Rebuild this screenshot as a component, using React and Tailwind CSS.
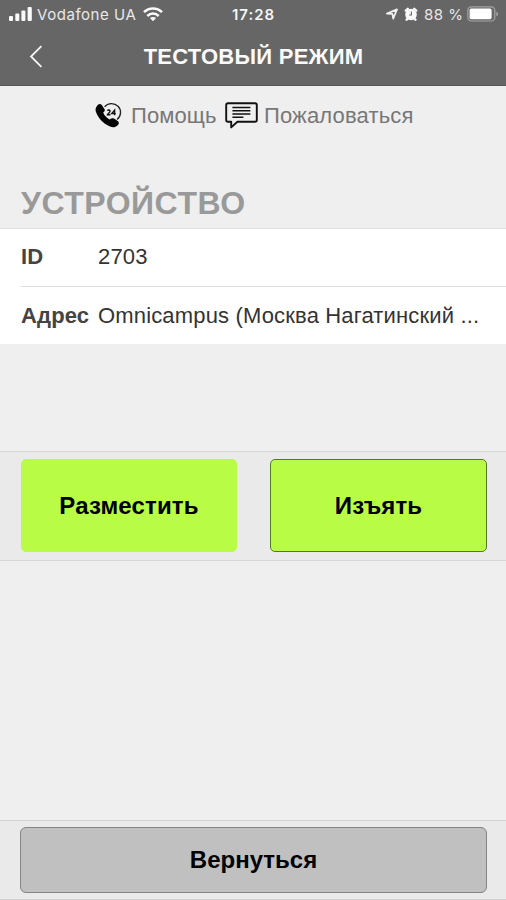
import { useState } from 'react'

const device = [
  { label: 'ID', value: '2703' },
  { label: 'Адрес',
    value: 'Omnicampus (Москва Нагатинский ...' },
]

function StatusBar() {
  return (
    <div className="relative flex h-7 items-center
      justify-between pl-[9px] pr-[7px]
      font-['Inter',sans-serif] text-[15px]
      leading-none text-[#e8e8e8]">
      <div className="flex items-center">
        <svg width="23" height="15" viewBox="0 0 23 15"
          fill="#fafafa">
          <rect x="0" y="9" width="4" height="5" rx="1" />
          <rect x="6.3" y="6.5" width="4" height="7.5" rx="1" />
          <rect x="12.4" y="3.5" width="4" height="10.5" rx="1" />
          <rect x="18.6" y="0" width="4.2" height="14" rx="1" />
        </svg>
        <span className="ml-[5px] w-[100px]
          whitespace-nowrap tracking-[0.55px]">
          Vodafone UA
        </span>
        <svg className="ml-[6px]" width="20" height="15"
          viewBox="0 0 20 15" fill="none"
          stroke="#fafafa" strokeWidth="2.5">
          <path d="M1 5.2C6 .2 14 .2 19 5.2" />
          <path d="M4.3 9C7.6 5.8 12.4 5.8 15.7 9" />
          <path d="M10 14.2 6.9 11.1C8.7 9.6 11.3 9.6 13.1 11.1Z"
            fill="#fafafa" stroke="none" />
        </svg>
      </div>
      <span className="absolute left-[232px]
        font-semibold tracking-[1px]
        text-[#f4f4f4]">
        17:28
      </span>
      <div className="flex items-center">
        <svg width="12" height="12" viewBox="0 0 12 12"
          fill="none" stroke="#f0f0f0" strokeWidth="1.7"
          strokeLinejoin="round">
          <path d="M.9 5.6 11 1.4 7.2 10.6 6.4 5.8Z" />
        </svg>
        <svg className="ml-[6px]" width="14" height="14"
          viewBox="0 0 14 14">
          <circle cx="7" cy="7.5" r="5.8" fill="#fafafa" />
          <path d="M1.8 3.6 3.8 1.8M12.2 3.6 10.2 1.8M2.6 12.7 3.8 11.6M11.4 12.7 10.2 11.6"
            stroke="#fafafa" strokeWidth="2.4"
            strokeLinecap="round" />
          <path d="M7.4 4.6V8H5.2" fill="none"
            stroke="#666" strokeWidth="1.1" />
        </svg>
        <span className="ml-[6px] w-[40px]
          whitespace-nowrap tracking-[0.5px]">
          88 %
        </span>
        <svg className="ml-[3px]" width="32" height="16"
          viewBox="0 0 32 16">
          <rect x=".8" y=".8" width="27" height="14.2"
            rx="3.6" fill="none" stroke="#a4a4a4"
            strokeWidth="1.2" />
          <rect x="2.6" y="2.6" width="22" height="10.6"
            rx="1.6" fill="#fff" />
          <path d="M29.4 5.4C31.6 6.2 31.6 9.6 29.4 10.4Z"
            fill="#a4a4a4" />
        </svg>
      </div>
    </div>
  )
}

function PhoneIcon() {
  return (
    <svg width="27" height="27" viewBox="0 0 27 27"
      fill="none">
      <path d="M9.6 4.8A9 8.8 0 1 1 22 17.4"
        stroke="#222" strokeWidth="1.3" />
      <path d="M1.8 4.2C3.2 2 5.2 1.4 6.8 3L9.6 7.2C10.2 8.4 9.6 9.4 8.2 10.6C9.2 13.6 11.8 16.2 14.8 17.4C16.4 16 17.6 15.8 19 16.6L23 19.2C24.4 20.4 24 22 22.4 23.6C20.4 25.6 17.8 25.8 15 24.6C8.4 21.8 3 16 .9 9.8C.2 7.4.6 5.8 1.8 4.2Z"
        fill="#050505" />
      <path d="M12.4 8.8C13 7.6 15.4 7.8 15 9.4C14.8 10.6 12.8 11.6 12.4 12.8H15.4M19.6 13.2V8.2L16.8 11.6H20.8"
        stroke="#111" strokeWidth="1.4" />
    </svg>
  )
}

function ComplaintIcon() {
  return (
    <svg width="33" height="27" viewBox="0 0 33 27"
      fill="none" stroke="#111" strokeLinejoin="round">
      <path d="M3 1.2H30Q31.8 1.2 31.8 3V18Q31.8 19.8 30 19.8H12.4L6.2 25.4V19.8H3Q1.2 19.8 1.2 18V3Q1.2 1.2 3 1.2Z"
        strokeWidth="1.9" />
      <path d="M7.4 5.6H25.4M7.4 8.8H25.4M7.4 12H25.4M7.4 15.2H18.4"
        strokeWidth="1.5" />
    </svg>
  )
}

export default function App() {
  const [active, setActive] = useState('take')

  return (
    <div className="flex h-[900px] w-[506px] flex-col
      overflow-hidden bg-[#efefef]
      font-['Liberation_Sans',Arial,sans-serif]">

      {/* Header */}
      <header className="h-[86px] shrink-0 border-b
        border-[#555] bg-[#666]">
        <StatusBar />
        <div className="grid h-[57px]
          grid-cols-[72px_1fr_72px] items-center">
          <button className="flex justify-center">
            <svg width="14" height="23" viewBox="0 0 14 23"
              fill="none" stroke="#f5f5f5"
              strokeWidth="1.8">
              <path d="M12.4 1.2 2 11.5 12.4 21.8" />
            </svg>
          </button>
          <h1 className="whitespace-nowrap pl-px
            text-center text-[22px] font-bold
            tracking-[0.25px] text-[#fafafa]">
            ТЕСТОВЫЙ РЕЖИМ
          </h1>
        </div>
      </header>

      {/* Support links */}
      <nav className="flex h-[58px] shrink-0
        items-center pl-[95px] text-[22px]
        text-[#777]">
        <a className="flex items-center">
          <PhoneIcon />
          <span className="ml-[9px] w-[85px]
            whitespace-nowrap tracking-[0.1px]">
            Помощь
          </span>
        </a>
        <a className="ml-[9px] flex items-center">
          <ComplaintIcon />
          <span className="ml-[6px] whitespace-nowrap
            tracking-[0.15px]">
            Пожаловаться
          </span>
        </a>
      </nav>

      {/* Device info */}
      <h2 className="h-[84px] shrink-0 pl-[21px]
        pt-[41px] text-[32px] font-bold leading-[36px]
        tracking-[0.5px] text-[#999]">
        УСТРОЙСТВО
      </h2>
      <dl className="h-[116px] shrink-0 border-t
        border-[#dedede] bg-white pl-[21px]
        text-[22px] text-[#333]">
        {device.map(row => (
          <div key={row.label}
            className="flex h-[58px] items-center
              border-b border-[#dedede] pb-[3px]
              last:h-[57px] last:border-0 last:pb-0">
            <dt className="w-[77px] font-bold
              tracking-[0.15px] text-[#444]">
              {row.label}
            </dt>
            <dd className="whitespace-nowrap
              tracking-[0.16px]">
              {row.value}
            </dd>
          </div>
        ))}
      </dl>

      {/* Actions */}
      <div className="mt-[107px] grid h-[110px] shrink-0
        grid-cols-[216px_217px] gap-x-[33px] border-y
        border-[#d6d6d6] bg-[#eaeaea] pl-[21px]
        pt-[7px] text-[24px] font-bold
        tracking-[0.15px]">
        <button onClick={() => setActive('put')}
          className={`h-[93px] rounded-[5px] border
            bg-[#b8fc45] text-black
            ${active === 'put'
              ? 'border-[#52792a]'
              : 'border-[#b8fc45]'}`}>
          Разместить
        </button>
        <button onClick={() => setActive('take')}
          className={`h-[93px] rounded-[5px] border
            bg-[#b8fc45] text-black
            ${active === 'take'
              ? 'border-[#52792a]'
              : 'border-[#b8fc45]'}`}>
          Изъять
        </button>
      </div>

      {/* Footer */}
      <footer className="mt-auto h-[80px] shrink-0
        border-y border-[#d3d3d3] bg-[#eaeaea]
        pl-5 pr-[19px] pt-[6px]">
        <button className="h-[66px] w-full rounded-[6px]
          border border-[#858585] bg-[#c0c0c0]
          pb-px text-[24px] font-bold text-black">
          Вернуться
        </button>
      </footer>
    </div>
  )
}
